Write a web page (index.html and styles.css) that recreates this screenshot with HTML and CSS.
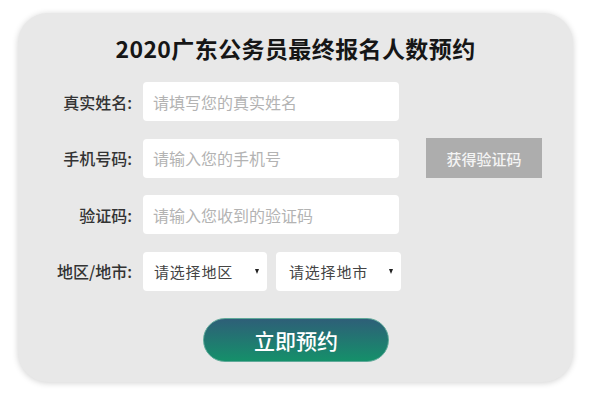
FILE: index.html
```html
<!DOCTYPE html>
<html lang="zh-CN">
<head>
<meta charset="utf-8">
<title>2020广东公务员最终报名人数预约</title>
<link rel="stylesheet" href="styles.css">
</head>
<body>
<div class="card">
  <h1 class="title">2020广东公务员最终报名人数预约</h1>
  <div class="form">
    <div class="row">
      <label class="label">真实姓名:</label>
      <input class="field" type="text" placeholder="请填写您的真实姓名">
    </div>
    <div class="row">
      <label class="label">手机号码:</label>
      <input class="field" type="text" placeholder="请输入您的手机号">
      <button class="code-btn" type="button">获得验证码</button>
    </div>
    <div class="row">
      <label class="label">验证码:</label>
      <input class="field" type="text" placeholder="请输入您收到的验证码">
    </div>
    <div class="row">
      <label class="label">地区/地市:</label>
      <div class="selects">
        <div class="select select-a"><span>请选择地区</span><i class="caret"></i></div>
        <div class="select select-b"><span>请选择地市</span><i class="caret"></i></div>
      </div>
    </div>
  </div>
  <button class="submit" type="button">立即预约</button>
</div>
</body>
</html>
```
FILE: styles.css
```css
* { box-sizing: border-box; }
html, body { margin: 0; padding: 0; background: #ffffff; }
body {
  font-family: "Noto Sans CJK SC", "Noto Sans", sans-serif;
  width: 600px;
  height: 400px;
  overflow: hidden;
}
.card {
  margin: 13px 0 0 18px;
  width: 555px;
  height: 369px;
  background: #e8e8e8;
  border-radius: 30px;
  box-shadow: 0 1px 6px rgba(0, 0, 0, 0.18);
  padding: 20px 0 0 30px;
  display: flex;
  flex-direction: column;
}
.title {
  margin: 0 0 0 -30px;
  text-align: center;
  font-size: 23px;
  line-height: 30px;
  font-weight: 700;
  color: #161616;
  letter-spacing: 0.4px;
}
.form {
  margin-top: 19px;
  display: flex;
  flex-direction: column;
  gap: 17.5px;
}
.row {
  display: flex;
  align-items: center;
  height: 39px;
}
.label {
  width: 84px;
  text-align: right;
  font-size: 16px;
  font-weight: 500;
  color: #333333;
  margin-right: 11px;
  white-space: nowrap;
}
.field {
  width: 256px;
  height: 39px;
  border: none;
  border-radius: 4px;
  background: #ffffff;
  padding: 0 10px;
  font-family: inherit;
  font-size: 16px;
  color: #333;
  outline: none;
}
.field::placeholder { color: #b3b3b3; }
.code-btn {
  margin-left: 27px;
  width: 116px;
  height: 40px;
  border: none;
  background: #adadad;
  color: #f4f4f4;
  font-family: inherit;
  font-size: 15px;
  font-weight: 500;
  padding: 0;
}
.selects {
  display: flex;
  gap: 9px;
}
.select {
  height: 39px;
  background: #ffffff;
  border-radius: 4px;
  display: flex;
  align-items: center;
  justify-content: space-between;
  padding: 0 8px 0 11px;
  font-size: 15px;
  letter-spacing: 0.8px;
  color: #444444;
}
.select-a { width: 124px; }
.select-b { width: 125px; padding-left: 13px; }
.caret {
  width: 0;
  height: 0;
  border-left: 2.5px solid transparent;
  border-right: 2.5px solid transparent;
  border-top: 5px solid #222;
}
.submit {
  margin: 27px 0 0 155px;
  width: 186px;
  height: 44px;
  border: 1px solid #5fa999;
  border-radius: 22px;
  background: linear-gradient(#2e5f78, #15906a);
  color: #ffffff;
  font-family: inherit;
  font-size: 21px;
  font-weight: 500;
  padding: 0;
}
```
